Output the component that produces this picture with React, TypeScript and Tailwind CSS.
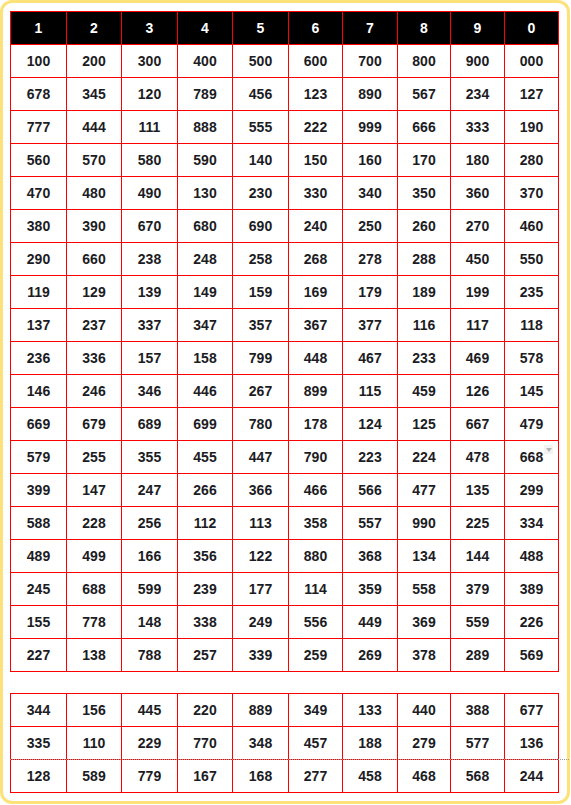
const head = ['1', '2', '3', '4', '5', '6', '7', '8', '9', '0']

const mainRows = [
  '100 200 300 400 500 600 700 800 900 000',
  '678 345 120 789 456 123 890 567 234 127',
  '777 444 111 888 555 222 999 666 333 190',
  '560 570 580 590 140 150 160 170 180 280',
  '470 480 490 130 230 330 340 350 360 370',
  '380 390 670 680 690 240 250 260 270 460',
  '290 660 238 248 258 268 278 288 450 550',
  '119 129 139 149 159 169 179 189 199 235',
  '137 237 337 347 357 367 377 116 117 118',
  '236 336 157 158 799 448 467 233 469 578',
  '146 246 346 446 267 899 115 459 126 145',
  '669 679 689 699 780 178 124 125 667 479',
  '579 255 355 455 447 790 223 224 478 668',
  '399 147 247 266 366 466 566 477 135 299',
  '588 228 256 112 113 358 557 990 225 334',
  '489 499 166 356 122 880 368 134 144 488',
  '245 688 599 239 177 114 359 558 379 389',
  '155 778 148 338 249 556 449 369 559 226',
  '227 138 788 257 339 259 269 378 289 569',
].map((r) => r.split(' '))

const extraRows = [
  '344 156 445 220 889 349 133 440 388 677',
  '335 110 229 770 348 457 188 279 577 136',
  '128 589 779 167 168 277 458 468 568 244',
].map((r) => r.split(' '))

function Cols() {
  return (
    <colgroup>
      <col className="w-[56px]" />
      <col className="w-[55px]" />
      <col className="w-[56px]" />
      <col className="w-[55px]" />
      <col className="w-[56px]" />
      <col className="w-[54px]" />
      <col className="w-[55px]" />
      <col className="w-[53px]" />
      <col className="w-[54px]" />
      <col className="w-[54px]" />
    </colgroup>
  )
}

function Cell({ v, header }: { v: string; header?: boolean }) {
  return (
    <td
      className={
        header
          ? 'border border-[#ff0000] h-[33px] p-0 text-center text-white bg-black'
          : 'border border-[#ff0000] h-[33px] p-0 text-center text-[#1c1c24]'
      }
    >
      {v}
    </td>
  )
}

export default function App() {
  return (
    <div
      className="w-[571px] h-[805px] bg-white"
      style={{ fontFamily: "'Liberation Sans', Arial, sans-serif" }}
    >
      <div className="relative w-[570px] h-[804px] border-[3px] border-[#fde27a] rounded-[12px] bg-white pl-[7px] pr-[9px] pt-[8px]">
        {/* main chart */}
        <table className="w-[548px] table-fixed border-collapse text-[14px] font-bold">
          <Cols />
          <tbody>
            <tr>
              {head.map((h) => (
                <Cell key={h} v={h} header />
              ))}
            </tr>
            {mainRows.map((row, i) => (
              <tr key={i}>
                {row.map((v, j) => (
                  <Cell key={j} v={v} />
                ))}
              </tr>
            ))}
          </tbody>
        </table>

        {/* extra rows */}
        <table className="mt-[21px] w-[548px] table-fixed border-collapse text-[14px] font-bold">
          <Cols />
          <tbody>
            {extraRows.map((row, i) => (
              <tr key={i}>
                {row.map((v, j) => (
                  <Cell key={j} v={v} />
                ))}
              </tr>
            ))}
          </tbody>
        </table>

        {/* page-break guide */}
        <div className="absolute left-[7px] right-[-2px] top-[756px] border-t border-dotted border-[#9a9a9a]" />

        {/* tiny select arrow */}
        <div className="absolute left-[541px] top-[442px] w-[9px] h-[9px] bg-[#f3f3f3] flex items-center justify-center">
          <div className="w-0 h-0 border-l-[3px] border-r-[3px] border-t-[4px] border-l-transparent border-r-transparent border-t-[#b5b5b5]" />
        </div>
      </div>
    </div>
  )
}
